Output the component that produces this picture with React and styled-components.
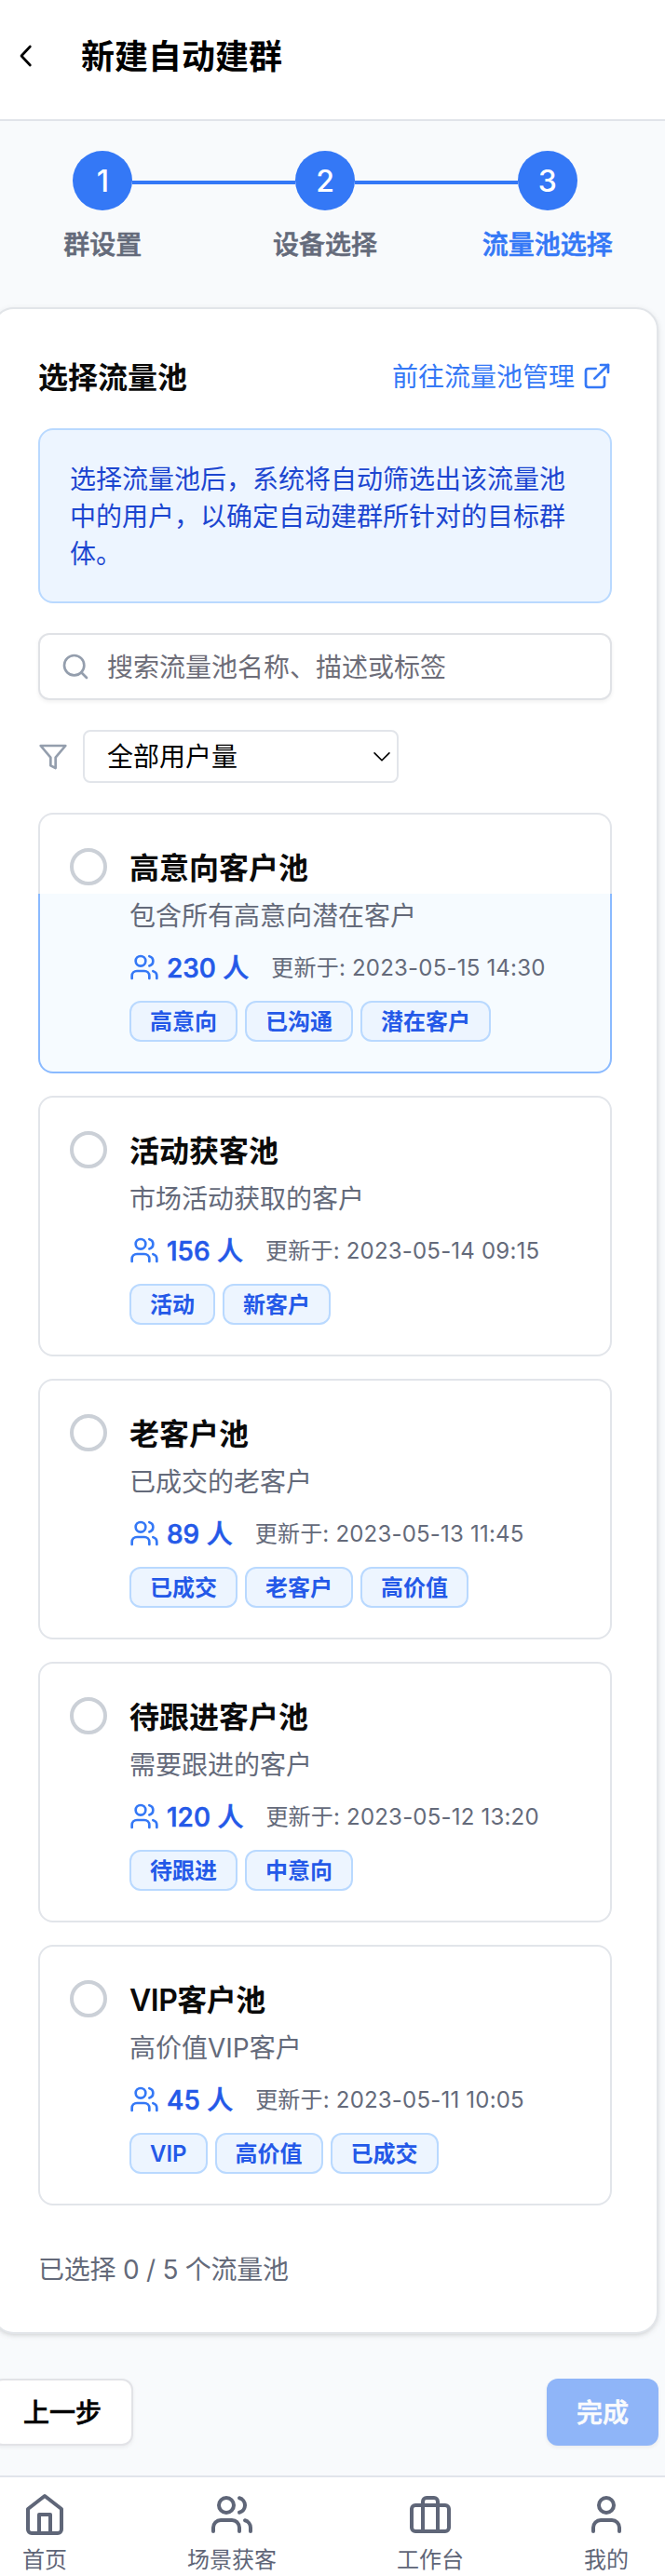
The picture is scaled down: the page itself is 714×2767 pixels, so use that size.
import React from "react";
import styled, { createGlobalStyle, css } from "styled-components";

const Global = createGlobalStyle`
  *, *::before, *::after { box-sizing: border-box; }
  html, body { margin: 0; padding: 0; }
  body {
    background: #f8fafc;
    color: #0a0a0a;
    font-family: Inter, "Noto Sans CJK SC", sans-serif;
    overflow: hidden;
  }
  button, input { font-family: inherit; }
`;

/* Noto Sans CJK has no medium cut, so medium text gets a hairline stroke. */
const mediumText = css`
  font-weight: 500;
  -webkit-text-stroke: 0.6px currentColor;
`;

const Screen = styled.div`
  width: 714px;
  height: 2767px;
  overflow: hidden;
  display: flex;
  flex-direction: column;
`;

const Header = styled.header`
  flex: none;
  height: 130px;
  display: flex;
  align-items: flex-start;
  padding: 36px 0 0 11px;
  gap: 44px;
  background: #fff;
  border-bottom: 2px solid #e1e4ea;
`;

const BackButton = styled.button`
  display: flex;
  align-items: center;
  width: 32px;
  height: 48px;
  padding: 0;
  border: 0;
  background: none;
  color: #000;
`;

const PageTitle = styled.h1`
  margin: 0;
  font-size: 36px;
  line-height: 51px;
  font-weight: 600;
  color: #000;
`;

const Content = styled.main`
  flex: none;
  width: 716px;
  height: 2529px;
  margin-left: -9px;
  padding-top: 32px;
`;

const Steps = styled.ol`
  list-style: none;
  margin: 0;
  padding: 0;
  height: 168px;
  display: grid;
  grid-template-columns: repeat(3, 1fr);
`;

const Step = styled.li`
  display: flex;
  flex-direction: column;
  align-items: center;
  gap: 16px;
`;

const StepTrack = styled.div`
  width: 100%;
  display: flex;
  align-items: center;
`;

const StepLine = styled.span`
  flex: 1;
  height: 4px;
  margin-top: 4px;
  background: ${(p) => (p.$visible ? "#3478f6" : "transparent")};
`;

const StepCircle = styled.span`
  width: 64px;
  height: 64px;
  border-radius: 50%;
  background: #3478f6;
  color: #fff;
  font-size: 32px;
  line-height: 65px;
  font-weight: 500;
  text-align: center;
`;

const StepLabel = styled.span`
  font-size: 28px;
  line-height: 42px;
  ${mediumText}
  color: ${(p) => (p.$active ? "#3478f6" : "#646a7a")};
`;

const Card = styled.section`
  height: 2177px;
  padding: 48px;
  border: 2px solid #e2e5e9;
  border-radius: 24px;
  background: #fff;
  box-shadow: 0 2px 6px rgba(0, 0, 0, 0.1), 0 2px 4px -2px rgba(0, 0, 0, 0.1);
`;

const CardHead = styled.div`
  height: 48px;
  display: flex;
  align-items: flex-start;
  justify-content: space-between;
`;

const CardTitle = styled.h2`
  margin: 0;
  font-size: 32px;
  line-height: 51px;
  font-weight: 600;
`;

const ManageLink = styled.a`
  display: flex;
  align-items: flex-start;
  gap: 8px;
  font-size: 28px;
  line-height: 50px;
  color: #3478f6;
  svg { margin-top: 8px; }
`;

const Notice = styled.p`
  margin: 32px 0;
  height: 188px;
  padding: 33px 32px 31px;
  border: 2px solid #b9d9ff;
  border-radius: 16px;
  background: #edf5ff;
  color: #1c46d0;
  font-size: 28px;
  line-height: 40px;
`;

const SearchBox = styled.label`
  display: flex;
  align-items: center;
  gap: 18px;
  height: 72px;
  padding: 0 22px;
  border: 2px solid #e0e2e6;
  border-radius: 12px;
  background: #fff;
  color: #949ead;
  box-shadow: 0 2px 4px rgba(0, 0, 0, 0.06);
`;

const SearchInput = styled.input`
  flex: 1;
  min-width: 0;
  height: 42px;
  padding: 2px 0 0;
  border: 0;
  outline: 0;
  background: none;
  font-size: 28px;
  &::placeholder { color: #6d6d78; opacity: 1; }
`;

const FilterRow = styled.div`
  display: flex;
  align-items: center;
  gap: 16px;
  height: 57px;
  margin: 32px 0;
  color: #949ead;
`;

const SelectBox = styled.button`
  display: flex;
  align-items: center;
  justify-content: space-between;
  width: 339px;
  height: 57px;
  padding: 0 6px 0 24px;
  border: 2px solid #e2e5ea;
  border-radius: 8px;
  background: #fff;
  color: #000;
  font-size: 28px;
  line-height: 40px;
`;

const PoolList = styled.div`
  display: flex;
  flex-direction: column;
  gap: 24px;
`;

const PoolCard = styled.article`
  display: flex;
  gap: 24px;
  height: 280px;
  padding: 32px;
  border: 2px solid #e2e5ea;
  border-radius: 16px;
  background: #fff;
  ${(p) =>
    p.$split &&
    css`
      border-color: transparent;
      background:
        linear-gradient(#fff 0 85px, #f6fbff 85px) padding-box,
        linear-gradient(#e2e5ea 0 87px, #8abaff 87px) border-box;
    `}
`;

const Radio = styled.span`
  flex: none;
  width: 40px;
  height: 40px;
  margin-top: 4px;
  border: 4px solid #cbd0d7;
  border-radius: 50%;
  background: #fff;
`;

const PoolBody = styled.div`
  flex: 1;
`;

const PoolName = styled.h3`
  margin: 0 0 6px;
  font-size: 32px;
  line-height: 51px;
  font-weight: 600;
  letter-spacing: ${(p) => (p.$latin ? "-0.5px" : "0")};
`;

const PoolDescription = styled.p`
  margin: 0;
  font-size: 28px;
  line-height: 40px;
  color: #646a7a;
`;

const Stats = styled.div`
  display: flex;
  align-items: center;
  height: 40px;
  margin: 15px 0 16px;
  color: #3478f6;
`;

const Count = styled.span`
  margin: 0 24px 0 8px;
  font-size: 28px;
  line-height: 40px;
  padding-top: 2px;
  ${mediumText}
  color: #2459e8;
`;

const Updated = styled.span`
  padding-top: 2px;
  font-size: 24px;
  line-height: 32px;
  letter-spacing: 0.2px;
  color: #646a7a;
`;

const Tags = styled.div`
  display: flex;
  gap: 8px;
`;

const Tag = styled.span`
  height: 44px;
  padding: 0 20px;
  border: 2px solid #b9d9ff;
  border-radius: 12px;
  background: #edf5ff;
  color: #2459e8;
  font-size: 24px;
  line-height: 41px;
  font-weight: 600;
`;

const Summary = styled.p`
  margin: 49px 0 0;
  font-size: 28px;
  line-height: 40px;
  letter-spacing: -0.25px;
  color: #646a7a;
`;

const Actions = styled.div`
  display: flex;
  justify-content: space-between;
  padding-top: 48px;
`;

const Button = styled.button`
  height: 72px;
  padding: 2px 32px 0;
  border: 0;
  border-radius: 12px;
  font-size: 28px;
  ${mediumText}
  line-height: 40px;
  box-shadow: 0 2px 4px rgba(0, 0, 0, 0.06);
  ${(p) =>
    p.$primary
      ? css`
          background: #8fb5f8;
          color: #fafbfd;
        `
      : css`
          border: 2px solid #e2e3e7;
          background: #fff;
          color: #000;
        `}
`;

const TabBar = styled.nav`
  flex: none;
  display: flex;
  justify-content: space-between;
  height: 108px;
  padding: 16px 39px 0 24px;
  border-top: 2px solid #e1e4ea;
  background: #fff;
`;

const Tab = styled.a`
  display: flex;
  flex-direction: column;
  align-items: center;
  gap: 8px;
  color: #5f6678;
  font-size: 24px;
  line-height: 34px;
`;

const Glyph = styled.svg.attrs({
  viewBox: "0 0 24 24",
  fill: "none",
  stroke: "currentColor",
  strokeWidth: 2,
  strokeLinecap: "round",
  strokeLinejoin: "round",
})`
  flex: none;
  display: block;
  width: ${(p) => p.$size}px;
  height: ${(p) => p.$size}px;
`;

const UsersIcon = ({ size }) => (
  <Glyph $size={size}>
    <path d="M16 21v-2a4 4 0 0 0-4-4H6a4 4 0 0 0-4 4v2" />
    <circle cx="9" cy="7" r="4" />
    <path d="M22 21v-2a4 4 0 0 0-3-3.87" />
    <path d="M16 3.13a4 4 0 0 1 0 7.75" />
  </Glyph>
);

const HomeIcon = () => (
  <Glyph $size={48}>
    <path d="m3 9 9-7 9 7v11a2 2 0 0 1-2 2H5a2 2 0 0 1-2-2z" />
    <path d="M9 22V12h6v10" />
  </Glyph>
);

const BriefcaseIcon = () => (
  <Glyph $size={48}>
    <rect x="2" y="7" width="20" height="14" rx="2" />
    <path d="M16 21V5a2 2 0 0 0-2-2h-4a2 2 0 0 0-2 2v16" />
  </Glyph>
);

const UserIcon = () => (
  <Glyph $size={48}>
    <path d="M19 21v-2a4 4 0 0 0-4-4H9a4 4 0 0 0-4 4v2" />
    <circle cx="12" cy="7" r="4" />
  </Glyph>
);

const steps = ["群设置", "设备选择", "流量池选择"];

const pools = [
  { name: "高意向客户池", desc: "包含所有高意向潜在客户", count: 230, time: "2023-05-15 14:30", tags: ["高意向", "已沟通", "潜在客户"] },
  { name: "活动获客池", desc: "市场活动获取的客户", count: 156, time: "2023-05-14 09:15", tags: ["活动", "新客户"] },
  { name: "老客户池", desc: "已成交的老客户", count: 89, time: "2023-05-13 11:45", tags: ["已成交", "老客户", "高价值"] },
  { name: "待跟进客户池", desc: "需要跟进的客户", count: 120, time: "2023-05-12 13:20", tags: ["待跟进", "中意向"] },
  { name: "VIP客户池", desc: "高价值VIP客户", count: 45, time: "2023-05-11 10:05", tags: ["VIP", "高价值", "已成交"] },
];

export default function App() {
  return (
    <Screen>
      <Global />
      <Header>
        <BackButton aria-label="返回">
          <Glyph $size={32}>
            <path d="m16 19.5-7-7.5 7-7.5" />
          </Glyph>
        </BackButton>
        <PageTitle>新建自动建群</PageTitle>
      </Header>

      <Content>
        <Steps>
          {steps.map((label, i) => (
            <Step key={label}>
              <StepTrack>
                <StepLine $visible={i > 0} />
                <StepCircle>{i + 1}</StepCircle>
                <StepLine $visible={i < steps.length - 1} />
              </StepTrack>
              <StepLabel $active={i === 2}>{label}</StepLabel>
            </Step>
          ))}
        </Steps>

        <Card>
          <CardHead>
            <CardTitle>选择流量池</CardTitle>
            <ManageLink>
              前往流量池管理
              <Glyph $size={32}>
                <path d="M15 3h6v6" />
                <path d="M10 14 21 3" />
                <path d="M18 13v6a2 2 0 0 1-2 2H5a2 2 0 0 1-2-2V8a2 2 0 0 1 2-2h6" />
              </Glyph>
            </ManageLink>
          </CardHead>

          <Notice>
            选择流量池后，系统将自动筛选出该流量池中的用户，以确定自动建群所针对的目标群体。
          </Notice>

          <SearchBox>
            <Glyph $size={32}>
              <circle cx="11" cy="11" r="8" />
              <path d="m21 21-4.3-4.3" />
            </Glyph>
            <SearchInput placeholder="搜索流量池名称、描述或标签" />
          </SearchBox>

          <FilterRow>
            <Glyph $size={32}>
              <path d="M22 3H2l8 9.46V19l4 2v-8.54L22 3z" />
            </Glyph>
            <SelectBox>
              全部用户量
              <Glyph $size={20}>
                <path d="m2.5 7 9.5 9.5L21.5 7" />
              </Glyph>
            </SelectBox>
          </FilterRow>

          <PoolList>
            {pools.map((pool, i) => (
              <PoolCard key={pool.name} $split={i === 0}>
                <Radio />
                <PoolBody>
                  <PoolName $latin={pool.name.startsWith("VIP")}>{pool.name}</PoolName>
                  <PoolDescription>{pool.desc}</PoolDescription>
                  <Stats>
                    <UsersIcon size={32} />
                    <Count>{pool.count} 人</Count>
                    <Updated>更新于: {pool.time}</Updated>
                  </Stats>
                  <Tags>
                    {pool.tags.map((tag) => (
                      <Tag key={tag}>{tag}</Tag>
                    ))}
                  </Tags>
                </PoolBody>
              </PoolCard>
            ))}
          </PoolList>

          <Summary>已选择 0 / 5 个流量池</Summary>
        </Card>

        <Actions>
          <Button>上一步</Button>
          <Button $primary>完成</Button>
        </Actions>
      </Content>

      <TabBar>
        <Tab><HomeIcon />首页</Tab>
        <Tab><UsersIcon size={48} />场景获客</Tab>
        <Tab><BriefcaseIcon />工作台</Tab>
        <Tab><UserIcon />我的</Tab>
      </TabBar>
    </Screen>
  );
}
